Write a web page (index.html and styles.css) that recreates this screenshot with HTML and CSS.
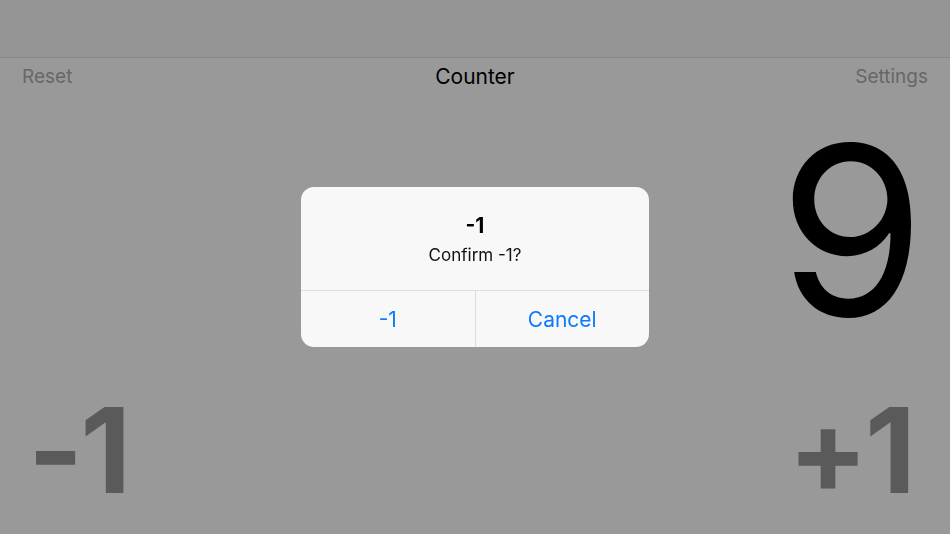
FILE: index.html
```html
<!DOCTYPE html>
<html lang="en">
<head>
    <meta charset="UTF-8">
    <meta name="viewport" content="width=device-width, initial-scale=1.0">
    <title>Counter</title>
    <link rel="stylesheet" href="styles.css">
</head>
<body>
    <div class="status"></div>
    <div class="nav">
        <span class="nav-link">Reset</span>
        <span class="nav-title">Counter</span>
        <span class="nav-link nav-right">Settings</span>
    </div>
    <div class="main">
        <div class="count">9</div>
        <div class="steps">
            <span class="step">-1</span>
            <span class="step">+1</span>
        </div>
    </div>

    <div class="overlay">
        <div class="alert">
            <div class="alert-body">
                <div class="alert-title">-1</div>
                <div class="alert-text">Confirm -1?</div>
            </div>
            <div class="alert-actions">
                <button class="alert-button">-1</button>
                <button class="alert-button">Cancel</button>
            </div>
        </div>
    </div>
</body>
</html>
```

FILE: styles.css
```css
body {
    font-family: Inter, "Liberation Sans", sans-serif;
    background-color: #999999;
    margin: 0;
    width: 950px;
    height: 534px;
    overflow: hidden;
    display: flex;
    flex-direction: column;
}
.status {
    height: 57px;
    background: #959595;
    border-bottom: 1px solid #878787;
}
.nav {
    height: 37px;
    line-height: 37px;
    padding: 0 22px;
    display: grid;
    grid-template-columns: 1fr auto 1fr;
}
.nav-link {
    font-size: 19px;
    color: #676767;
}
.nav-right {
    text-align: right;
}
.nav-title {
    font-size: 21px;
    color: #000;
}
.main {
    flex: 1;
    display: flex;
    flex-direction: column;
    justify-content: space-between;
}
.count {
    margin-top: 17px;
    padding-right: 25px;
    text-align: right;
    font-size: 236px;
    line-height: 1;
    color: #000;
}
.steps {
    display: flex;
    justify-content: space-between;
    padding: 0 37px 25px 28px;
}
.step {
    font-size: 118px;
    font-weight: 700;
    line-height: 1;
    letter-spacing: -3px;
    color: #5a5a5a;
}
.overlay {
    position: fixed;
    top: 0;
    left: 0;
    right: 0;
    bottom: 0;
    display: flex;
    align-items: center;
    justify-content: center;
}
.alert {
    width: 348px;
    background: #f8f8f8;
    border-radius: 13px;
    overflow: hidden;
    text-align: center;
}
.alert-body {
    padding: 26px 16px 24px;
}
.alert-title {
    font-size: 21px;
    line-height: 26px;
    font-weight: 700;
    color: #000;
}
.alert-text {
    margin-top: 5px;
    font-size: 17px;
    line-height: 22px;
    color: #111;
}
.alert-actions {
    display: flex;
    border-top: 1px solid #dedede;
}
.alert-button {
    flex: 1;
    height: 56px;
    padding: 0;
    border: none;
    background: none;
    font-family: Inter, "Liberation Sans", sans-serif;
    font-size: 21px;
    color: #0a7aff;
}
.alert-button + .alert-button {
    border-left: 1px solid #dedede;
}
```
